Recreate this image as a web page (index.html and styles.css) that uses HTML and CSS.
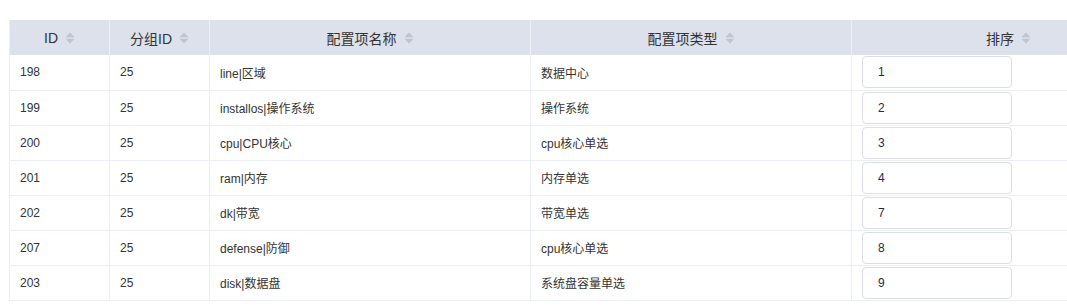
FILE: index.html
```html
<!DOCTYPE html>
<html lang="zh">
<head>
<meta charset="utf-8">
<link rel="stylesheet" href="styles.css">
</head>
<body>
<div class="wrap">
  <table class="grid">
    <colgroup>
      <col class="c1"><col class="c2"><col class="c3"><col class="c4"><col class="c5">
    </colgroup>
    <thead>
      <tr>
        <th><span class="h">ID<svg class="sort" viewBox="0 0 10 12"><path d="M5 0.5 L9.5 5.2 H0.5 Z M5 11.5 L9.5 6.8 H0.5 Z"/></svg></span></th>
        <th><span class="h">分组ID<svg class="sort" viewBox="0 0 10 12"><path d="M5 0.5 L9.5 5.2 H0.5 Z M5 11.5 L9.5 6.8 H0.5 Z"/></svg></span></th>
        <th><span class="h">配置项名称<svg class="sort" viewBox="0 0 10 12"><path d="M5 0.5 L9.5 5.2 H0.5 Z M5 11.5 L9.5 6.8 H0.5 Z"/></svg></span></th>
        <th><span class="h">配置项类型<svg class="sort" viewBox="0 0 10 12"><path d="M5 0.5 L9.5 5.2 H0.5 Z M5 11.5 L9.5 6.8 H0.5 Z"/></svg></span></th>
        <th><span class="h">排序<svg class="sort" viewBox="0 0 10 12"><path d="M5 0.5 L9.5 5.2 H0.5 Z M5 11.5 L9.5 6.8 H0.5 Z"/></svg></span></th>
      </tr>
    </thead>
    <tbody>
      <tr><td>198</td><td>25</td><td>line|区域</td><td>数据中心</td><td><div class="inp">1</div></td></tr>
      <tr><td>199</td><td>25</td><td>installos|操作系统</td><td>操作系统</td><td><div class="inp">2</div></td></tr>
      <tr><td>200</td><td>25</td><td>cpu|CPU核心</td><td>cpu核心单选</td><td><div class="inp">3</div></td></tr>
      <tr><td>201</td><td>25</td><td>ram|内存</td><td>内存单选</td><td><div class="inp">4</div></td></tr>
      <tr><td>202</td><td>25</td><td>dk|带宽</td><td>带宽单选</td><td><div class="inp">7</div></td></tr>
      <tr><td>207</td><td>25</td><td>defense|防御</td><td>cpu核心单选</td><td><div class="inp">8</div></td></tr>
      <tr><td>203</td><td>25</td><td>disk|数据盘</td><td>系统盘容量单选</td><td><div class="inp">9</div></td></tr>
    </tbody>
  </table>
</div>
</body>
</html>
```

FILE: styles.css
```css
html, body {
  margin: 0;
  padding: 0;
  background: #fff;
}
body {
  font-family: "Liberation Sans", Arial, "Noto Sans CJK SC", sans-serif;
  color: #333;
  width: 1067px;
  height: 308px;
  overflow: hidden;
}
.wrap {
  padding: 20px 0 0 9px;
  overflow: hidden;
  width: 1058px;
}
.grid {
  border-collapse: collapse;
  table-layout: fixed;
  width: 1156px;
  border-left: 1px solid #ebeef5;
}
.c1 { width: 100px; }
.c2 { width: 100px; }
.c3 { width: 321px; }
.c4 { width: 321px; }
.c5 { width: 314px; }
.grid th {
  height: 35px;
  padding: 0;
  background: #dce1ec;
  border-right: 1px solid #eef0f6;
  font-weight: normal;
  font-size: 14px;
  color: #333;
  text-align: center;
  box-sizing: border-box;
}
.h {
  display: inline-flex;
  align-items: center;
  gap: 7px;
}
.sort {
  width: 10px;
  height: 12px;
  fill: #c0c4cc;
}
.grid td {
  height: 35px;
  box-sizing: border-box;
  padding: 0 10px;
  font-size: 12px;
  color: #333;
  border-right: 1px solid #ebeef5;
  border-bottom: 1px solid #ebeef5;
  white-space: nowrap;
}
.inp {
  width: 150px;
  height: 32px;
  box-sizing: border-box;
  border: 1px solid #dcdfe6;
  border-radius: 4px;
  padding: 0 15px;
  display: flex;
  align-items: center;
  font-size: 12px;
  color: #1f2d3d;
}
```
